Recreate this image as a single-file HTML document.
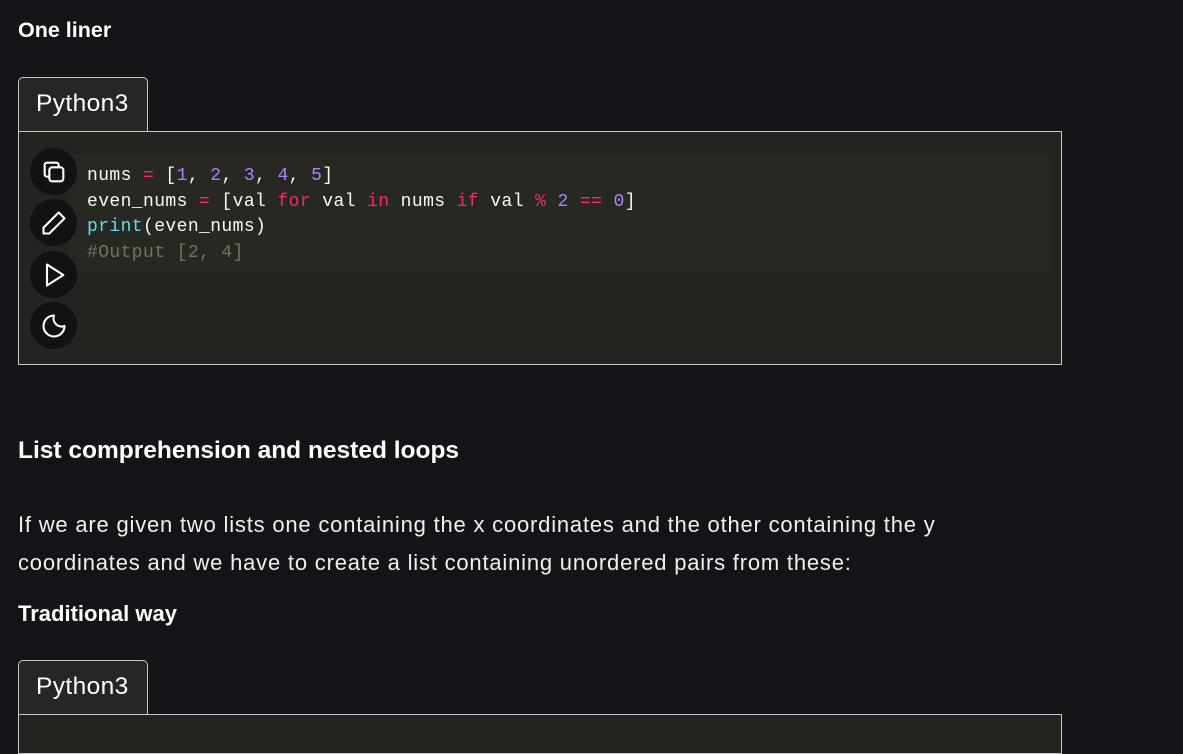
<!DOCTYPE html>
<html><head><meta charset="utf-8"><style>
body{margin:0;background:#131417;width:1183px;height:727px;overflow:hidden;position:relative;font-family:"Liberation Sans",sans-serif;color:#fff}
.a{position:absolute;white-space:nowrap}
.tab{position:absolute;left:18px;width:130px;height:54px;border:1px solid #c8c8c8;border-bottom:none;border-radius:5px 5px 0 0;background:#262624;font-size:24.5px;letter-spacing:0.4px;color:#fff;box-sizing:border-box;padding:12px 0 0 17px;z-index:2}
.box{position:absolute;left:18px;width:1044px;border:1px solid #c8c8c8;background:#232320;box-sizing:border-box}
.code{position:absolute;left:68px;top:155px;width:985px;height:116px;background:#272822}
pre{margin:0;position:absolute;left:87px;top:164px;font-family:"Liberation Mono",monospace;font-size:18px;line-height:25.5px;color:#f8f8f2;letter-spacing:0.4px}
.k{color:#f92672}.n{color:#ae81ff}.f{color:#66d9ef}.c{color:#75715e}
.btn{position:absolute;left:30px;width:47px;height:47px;border-radius:50%;background:#121212;display:flex;align-items:center;justify-content:center}
</style></head><body>
<div class="a" style="left:18px;top:18px;font-size:21.5px;font-weight:bold">One liner</div>
<div class="tab" style="top:77px">Python3</div>
<div class="box" style="top:131px;height:234px"></div>
<div class="code"></div>
<pre>nums <span class="k">=</span> [<span class="n">1</span>, <span class="n">2</span>, <span class="n">3</span>, <span class="n">4</span>, <span class="n">5</span>]
even_nums <span class="k">=</span> [val <span class="k">for</span> val <span class="k">in</span> nums <span class="k">if</span> val <span class="k">%</span> <span class="n">2</span> <span class="k">==</span> <span class="n">0</span>]
<span class="f">print</span>(even_nums)
<span class="c">#Output [2, 4]</span></pre>
<div class="btn" style="top:148px"><svg width="28" height="28" viewBox="0 0 24 24" fill="none" stroke="#fff" stroke-width="1.8"><rect x="8" y="8" width="12" height="12" rx="2.5"/><path d="M16 8V6a2 2 0 0 0-2-2H6a2 2 0 0 0-2 2v8a2 2 0 0 0 2 2h2"/></svg></div>
<div class="btn" style="top:199px"><svg width="28" height="28" viewBox="0 0 24 24" fill="none" stroke="#fff" stroke-width="1.8" stroke-linejoin="round"><path d="M16 3l5 5L8 21H3v-5z"/></svg></div>
<div class="btn" style="top:251px"><svg width="28" height="28" viewBox="0 0 24 24" fill="none" stroke="#fff" stroke-width="1.8" stroke-linejoin="round"><path d="M6 3l14 9-14 9z"/></svg></div>
<div class="btn" style="top:302px"><svg width="28" height="28" viewBox="0 0 24 24" fill="none" stroke="#fff" stroke-width="1.8" stroke-linejoin="round"><path d="M12 3a7 7 0 0 0 9 9 9 9 0 1 1-9-9z"/></svg></div>
<div class="a" style="left:18px;top:437px;font-size:24.5px;font-weight:bold">List comprehension and nested loops</div>
<div class="a" style="left:18px;top:506px;font-size:22px;line-height:38px;letter-spacing:0.8px;color:#f0f0f0">If we are given two lists one containing the x coordinates and the other containing the y<br>coordinates and we have to create a list containing unordered pairs from these:</div>
<div class="a" style="left:18px;top:601px;font-size:22px;font-weight:bold">Traditional way</div>
<div class="tab" style="top:660px">Python3</div>
<div class="box" style="top:714px;height:40px"></div>
</body></html>
